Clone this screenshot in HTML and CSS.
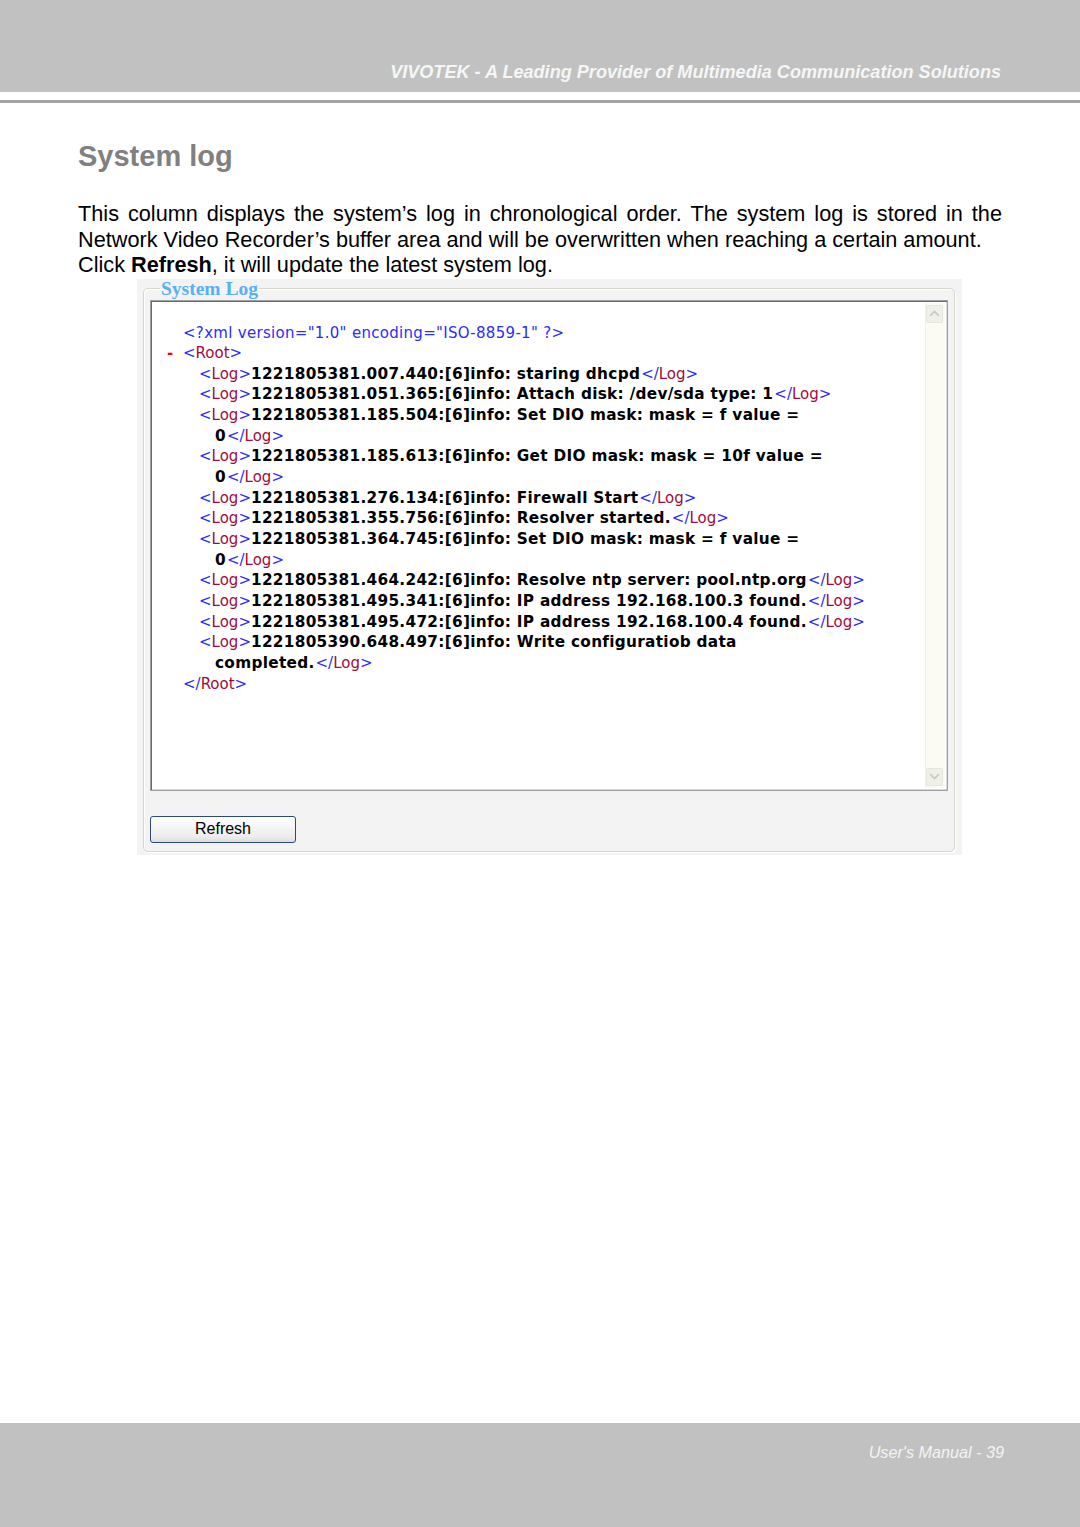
FILE: index.html
```html
<!DOCTYPE html>
<html lang="en">
<head>
<meta charset="utf-8">
<title>System log</title>
<link rel="stylesheet" href="styles.css">
</head>
<body>
<header class="topbar">
  <div class="topbar-title">VIVOTEK - A Leading Provider of Multimedia Communication Solutions</div>
</header>
<div class="rule"></div>
<main class="content">
  <h1 class="title">System log</h1>
  <p class="intro"><span class="intro-first">This column displays the system’s log in chronological order. The system log is stored in the</span>Network Video Recorder’s buffer area and will be overwritten when reaching a certain amount.<br>Click <b>Refresh</b>, it will update the latest system log.</p>
  <div class="shot">
    <fieldset class="panel">
      <legend class="panel-legend">System Log</legend>
      <div class="logbox">
        <div class="log">
          <div class="ln l1 decl"><span class="b">&lt;?xml version="1.0" encoding="ISO-8859-1" ?&gt;</span></div>
          <div class="ln l0"><span class="m">-</span><span class="b">&lt;</span><span class="t">Root</span><span class="b">&gt;</span></div>
          <div class="ln l2"><span class="b">&lt;</span><span class="t">Log</span><span class="b">&gt;</span><span class="x">1221805381.007.440:[6]info: staring dhcpd</span><span class="b">&lt;/</span><span class="t">Log</span><span class="b">&gt;</span></div>
          <div class="ln l2"><span class="b">&lt;</span><span class="t">Log</span><span class="b">&gt;</span><span class="x">1221805381.051.365:[6]info: Attach disk: /dev/sda type: 1</span><span class="b">&lt;/</span><span class="t">Log</span><span class="b">&gt;</span></div>
          <div class="ln l2"><span class="b">&lt;</span><span class="t">Log</span><span class="b">&gt;</span><span class="x">1221805381.185.504:[6]info: Set DIO mask: mask = f value =</span></div>
          <div class="ln l3"><span class="x">0</span><span class="b">&lt;/</span><span class="t">Log</span><span class="b">&gt;</span></div>
          <div class="ln l2"><span class="b">&lt;</span><span class="t">Log</span><span class="b">&gt;</span><span class="x">1221805381.185.613:[6]info: Get DIO mask: mask = 10f value =</span></div>
          <div class="ln l3"><span class="x">0</span><span class="b">&lt;/</span><span class="t">Log</span><span class="b">&gt;</span></div>
          <div class="ln l2"><span class="b">&lt;</span><span class="t">Log</span><span class="b">&gt;</span><span class="x">1221805381.276.134:[6]info: Firewall Start</span><span class="b">&lt;/</span><span class="t">Log</span><span class="b">&gt;</span></div>
          <div class="ln l2"><span class="b">&lt;</span><span class="t">Log</span><span class="b">&gt;</span><span class="x">1221805381.355.756:[6]info: Resolver started.</span><span class="b">&lt;/</span><span class="t">Log</span><span class="b">&gt;</span></div>
          <div class="ln l2"><span class="b">&lt;</span><span class="t">Log</span><span class="b">&gt;</span><span class="x">1221805381.364.745:[6]info: Set DIO mask: mask = f value =</span></div>
          <div class="ln l3"><span class="x">0</span><span class="b">&lt;/</span><span class="t">Log</span><span class="b">&gt;</span></div>
          <div class="ln l2"><span class="b">&lt;</span><span class="t">Log</span><span class="b">&gt;</span><span class="x">1221805381.464.242:[6]info: Resolve ntp server: pool.ntp.org</span><span class="b">&lt;/</span><span class="t">Log</span><span class="b">&gt;</span></div>
          <div class="ln l2"><span class="b">&lt;</span><span class="t">Log</span><span class="b">&gt;</span><span class="x">1221805381.495.341:[6]info: IP address 192.168.100.3 found.</span><span class="b">&lt;/</span><span class="t">Log</span><span class="b">&gt;</span></div>
          <div class="ln l2"><span class="b">&lt;</span><span class="t">Log</span><span class="b">&gt;</span><span class="x">1221805381.495.472:[6]info: IP address 192.168.100.4 found.</span><span class="b">&lt;/</span><span class="t">Log</span><span class="b">&gt;</span></div>
          <div class="ln l2"><span class="b">&lt;</span><span class="t">Log</span><span class="b">&gt;</span><span class="x">1221805390.648.497:[6]info: Write configuratiob data</span></div>
          <div class="ln l3"><span class="x">completed.</span><span class="b">&lt;/</span><span class="t">Log</span><span class="b">&gt;</span></div>
          <div class="ln l1"><span class="b">&lt;/</span><span class="t">Root</span><span class="b">&gt;</span></div>
        </div>
        <div class="scrollbar">
          <div class="sb-btn">
            <svg width="11" height="7" viewBox="0 0 11 7"><path d="M1 6 L5.5 1.5 L10 6" fill="none" stroke="#c8c8c0" stroke-width="1.6"/></svg>
          </div>
          <div class="sb-track"></div>
          <div class="sb-btn">
            <svg width="11" height="7" viewBox="0 0 11 7"><path d="M1 1 L5.5 5.5 L10 1" fill="none" stroke="#c8c8c0" stroke-width="1.6"/></svg>
          </div>
        </div>
      </div>
      <button class="refresh" type="button">Refresh</button>
    </fieldset>
  </div>
</main>
<footer class="footbar">
  <div class="footbar-text">User's Manual - 39</div>
</footer>
</body>
</html>
```
FILE: styles.css
```css
html, body {
  margin: 0;
  padding: 0;
}
body {
  font-family: "Liberation Sans", Arial, sans-serif;
  background: #ffffff;
  color: #000000;
  min-height: 1527px;
  display: flex;
  flex-direction: column;
}
.topbar {
  height: 92px;
  background: #c0c1c0;
  display: flex;
  justify-content: flex-end;
  align-items: flex-end;
  padding-right: 79px;
  box-sizing: border-box;
}
.topbar-title {
  font-size: 18.1px;
  line-height: 20px;
  font-weight: bold;
  font-style: italic;
  color: #f6f6f6;
  margin-bottom: 10px;
}
.rule {
  height: 3px;
  background: #a3a3a3;
  margin-top: 8px;
}
.content {
  padding: 0 78px;
}
.title {
  margin: 37px 0 0 0;
  font-size: 29px;
  line-height: 32px;
  font-weight: bold;
  color: #808080;
}
.intro {
  margin: 29px 0 0 0;
  font-size: 21.7px;
  line-height: 25.5px;
  text-align: left;
  width: 924px;
}
.intro-first {
  display: block;
  text-align: justify;
  text-align-last: justify;
}
.intro b {
  font-weight: bold;
}
.shot {
  margin: 1px 0 0 59px;
  width: 825px;
  height: 576px;
  background: #f3f3f3;
  box-sizing: border-box;
  padding: 0 7px 3px 6px;
  display: flex;
}
.panel {
  flex: 1;
  margin: 0;
  border: 1px solid #d6d6c8;
  border-radius: 5px;
  padding: 1px 6px 8px 6px;
  box-shadow: 1px 1px 0 #ffffff inset, 1px 1px 0 #ffffff;
  min-width: 0;
}
.panel-legend {
  font-family: "Liberation Serif", "Times New Roman", serif;
  font-weight: bold;
  font-size: 19.5px;
  line-height: 20px;
  color: #55b0f6;
  padding: 0 1px;
  margin-left: 10px;
}
.logbox {
  height: 491px;
  box-sizing: border-box;
  border: 1px solid #a0a0a0;
  box-shadow: inset 1px 1px 0 #6a6a6a, inset -1px -1px 0 #d8d8d8;
  background: #ffffff;
  display: flex;
  padding: 2px;
}
.log {
  flex: 1;
  padding: 20px 0 0 14px;
  font-family: "DejaVu Sans", Verdana, sans-serif;
  font-size: 15px;
  line-height: 20.65px;
  white-space: nowrap;
}
.ln.l0 { padding-left: 0; }
.ln.l1 { padding-left: 16px; }
.ln.l2 { padding-left: 32px; }
.ln.l3 { padding-left: 48px; }
.decl {
  letter-spacing: 0.3px;
}
.m {
  color: #ff0000;
  font-weight: bold;
  display: inline-block;
  width: 16px;
}
.b { color: #2b2bff; }
.t { color: #a00a3a; }
.x {
  color: #000000;
  font-weight: bold;
  font-size: 15.3px;
  letter-spacing: 0.3px;
  margin-right: 1px;
}
.scrollbar {
  width: 20px;
  background: #fbfbf3;
  display: flex;
  flex-direction: column;
  align-items: flex-start;
  padding: 2px 0;
  box-sizing: border-box;
  border-left: 1px solid #f0f0e6;
}
.sb-btn {
  width: 17px;
  height: 18px;
  box-sizing: border-box;
  border: 1px solid #e6e6dc;
  border-radius: 2px;
  background: #f0f0ea;
  display: flex;
  align-items: center;
  justify-content: center;
}
.sb-track {
  flex: 1;
}
.refresh {
  margin-top: 25px;
  width: 146px;
  height: 27px;
  border: 1px solid #2a4a7a;
  border-radius: 3px;
  background: linear-gradient(#ffffff, #ececec 80%, #dcdcdc);
  font-family: "Liberation Sans", Arial, sans-serif;
  font-size: 16px;
  color: #000000;
  padding: 0;
  display: block;
}
.footbar {
  margin-top: auto;
  height: 104px;
  background: #c0c1c0;
  display: flex;
  justify-content: flex-end;
  align-items: flex-start;
  padding-right: 76px;
}
.footbar-text {
  margin-top: 19px;
  font-size: 16.2px;
  line-height: 20px;
  font-style: italic;
  color: #f4f4f4;
}
```
